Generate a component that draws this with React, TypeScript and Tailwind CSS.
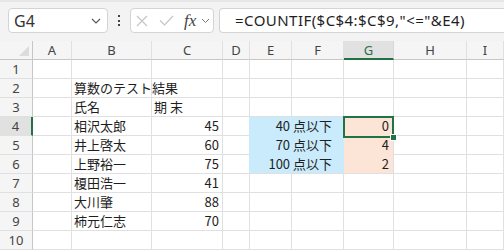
import React from 'react';

const COLS = ['A', 'B', 'C', 'D', 'E', 'F', 'G', 'H', 'I'];
const WIDTHS = ['w-[39px]', 'w-[80px]', 'w-[71px]', 'w-[27px]', 'w-[42px]', 'w-[52px]', 'w-[50px]', 'w-[73px]', 'flex-1'];

const names = ['相沢太郎', '井上啓太', '上野裕一', '榎田浩一', '大川肇', '柿元仁志'];
const scores = [45, 60, 75, 41, 88, 70];
const bands = [
  { label: '40 点以下', count: 0 },
  { label: '70 点以下', count: 4 },
  { label: '100 点以下', count: 2 },
];

const cellBase = 'h-[19px] shrink-0 border-r border-b border-[#e0e0e0] relative text-[13px] leading-[18px]';

function Cell({ col, row }: { col: number; row: number }) {
  const w = WIDTHS[col];
  const band = row >= 4 && row <= 6 ? bands[row - 4] : null;

  // B column text
  if (col === 1) {
    let txt = '';
    if (row === 2) txt = '算数のテスト結果';
    if (row === 3) txt = '氏名';
    if (row >= 4 && row <= 9) txt = names[row - 4];
    return (
      <div className={`${cellBase} ${w}`}>
        <span className="absolute left-[2px] top-0 whitespace-nowrap z-10">{txt}</span>
      </div>
    );
  }
  if (col === 2) {
    return (
      <div className={`${cellBase} ${w} ${row >= 4 && row <= 9 ? 'text-right pr-[3px]' : 'pl-[2px]'}`}>
        {row === 3 && '期 末'}
        {row >= 4 && row <= 9 && scores[row - 4]}
      </div>
    );
  }
  if (col === 3 && band) {
    return <div className={`h-[19px] shrink-0 border-b border-[#e0e0e0] ${w} flex`}><div className="flex-1" /><div className="w-px bg-[#c9ebfb]" /></div>;
  }
  if (col === 4 && band) {
    return (
      <div className={`h-[19px] shrink-0 w-[94px] bg-[#c9ebfb] text-right pr-[12px] text-[13px] leading-[18px] ${row === 6 ? 'border-b border-[#e0e0e0]' : ''}`}>
        {band.label}
      </div>
    );
  }
  if (col === 5 && band) return null;
  if (col === 6 && band) {
    return (
      <div className={`h-[19px] shrink-0 ${w} bg-[#fce4d6] border-r border-[#e0e0e0] text-right pr-[4px] text-[13px] leading-[18px] relative ${row === 6 ? 'border-b' : ''}`}>
        {band.count}
        {row === 4 && (
          <div className="absolute -left-px -top-px -right-px -bottom-[2px] border-2 border-[#217346] z-20">
            <div className="absolute -right-[5px] -bottom-[5px] w-[7px] h-[7px] bg-[#217346] border border-white" />
          </div>
        )}
      </div>
    );
  }
  return <div className={`${cellBase} ${w}`} />;
}

export default function App() {
  const rows = [1, 2, 3, 4, 5, 6, 7, 8, 9, 10];
  return (
    <div className="w-[504px] h-[250px] overflow-hidden bg-white text-[#1e1e1e]" style={{ fontFamily: '"Noto Sans CJK JP", "Noto Sans", sans-serif' }}>
      {/* toolbar */}
      <div className="h-[41px] bg-[#f3f3f3] border-t-2 border-[#e6e6e6] flex items-start pt-[6px]">
        <div className="ml-[8px] w-[100px] h-[25px] bg-white border border-[#d4d4d4] rounded-[4px] flex items-center pl-[5px] pr-[6px]">
          <span className="text-[16px] flex-1 text-[#333]" style={{ fontFamily: '"Noto Sans", sans-serif' }}>G4</span>
          <svg width="10" height="6" viewBox="0 0 10 6" className="text-[#555]"><path d="M1 1l4 4 4-4" fill="none" stroke="currentColor" strokeWidth="1.1" /></svg>
        </div>
        <div className="w-[22px] h-[25px] flex flex-col items-center justify-center gap-[2.5px]">
          <div className="w-[2px] h-[2px] bg-[#444]" />
          <div className="w-[2px] h-[2px] bg-[#444]" />
          <div className="w-[2px] h-[2px] bg-[#444]" />
        </div>
        <div className="w-[84px] h-[25px] bg-white border border-[#d4d4d4] rounded-[4px] flex items-center pl-[5px]">
          <svg width="12" height="12" viewBox="0 0 12 12" className="text-[#c4c4c4]"><path d="M1 1l10 10M11 1L1 11" stroke="currentColor" strokeWidth="1.1" /></svg>
          <svg width="15" height="11" viewBox="0 0 15 11" className="ml-[11px] text-[#c4c4c4]"><path d="M1 5.5l4.5 4.5L14 1" fill="none" stroke="currentColor" strokeWidth="1.1" /></svg>
          <span className="ml-[10px] text-[17px] italic leading-none text-[#444]" style={{ fontFamily: '"Liberation Serif", serif' }}>fx</span>
          <svg width="9" height="6" viewBox="0 0 9 6" className="ml-[5px] text-[#777]"><path d="M1 1l3.5 3.5L8 1" fill="none" stroke="currentColor" strokeWidth="1" /></svg>
        </div>
        <div className="ml-[5px] flex-1 h-[25px] bg-white border border-r-0 border-[#d4d4d4] rounded-l-[4px] flex items-center pl-[15px] text-[15px] tracking-[0.45px] whitespace-nowrap" style={{ fontFamily: '"Noto Sans", sans-serif' }}>
          =COUNTIF($C$4:$C$9,"&lt;="&amp;E4)
        </div>
      </div>

      {/* column header */}
      <div className="flex h-[19px] bg-[#f5f5f5] text-[13px] text-[#444] leading-[18px]" style={{ fontFamily: '"Noto Sans", sans-serif' }}>
        <div className="w-[33px] shrink-0 border-r border-b border-[#c6c6c6] relative">
          <div className="absolute left-[19px] top-[5px] w-0 h-0 border-l-[10px] border-l-transparent border-b-[10px] border-b-[#dcdcdc]" />
        </div>
        {COLS.map((c, i) =>
          c === 'G' ? (
            <div key={c} className={`${WIDTHS[i]} shrink-0 text-center border-r border-[#d8d8d8] bg-[#e1e1e1] text-[#217346] border-b-2 border-b-[#217346]`}>{c}</div>
          ) : (
            <div key={c} className={`${WIDTHS[i]} shrink-0 text-center border-r border-[#e0e0e0] border-b border-b-[#c6c6c6]`}>{c}</div>
          )
        )}
      </div>

      {rows.map((r) => (
        <div key={r} className="flex">
          <div
            className={`w-[33px] h-[19px] shrink-0 border-b border-[#e0e0e0] text-center text-[13px] leading-[18px] text-[#444] ${r === 4 ? 'bg-[#e1e1e1] border-r-2 border-r-[#217346]' : 'bg-[#f5f5f5] border-r border-r-[#c6c6c6]'}`}
            style={{ fontFamily: '"Noto Sans", sans-serif' }}
          >
            {r}
          </div>
          {COLS.map((c, i) => (
            <Cell key={c} col={i} row={r} />
          ))}
        </div>
      ))}
    </div>
  );
}
